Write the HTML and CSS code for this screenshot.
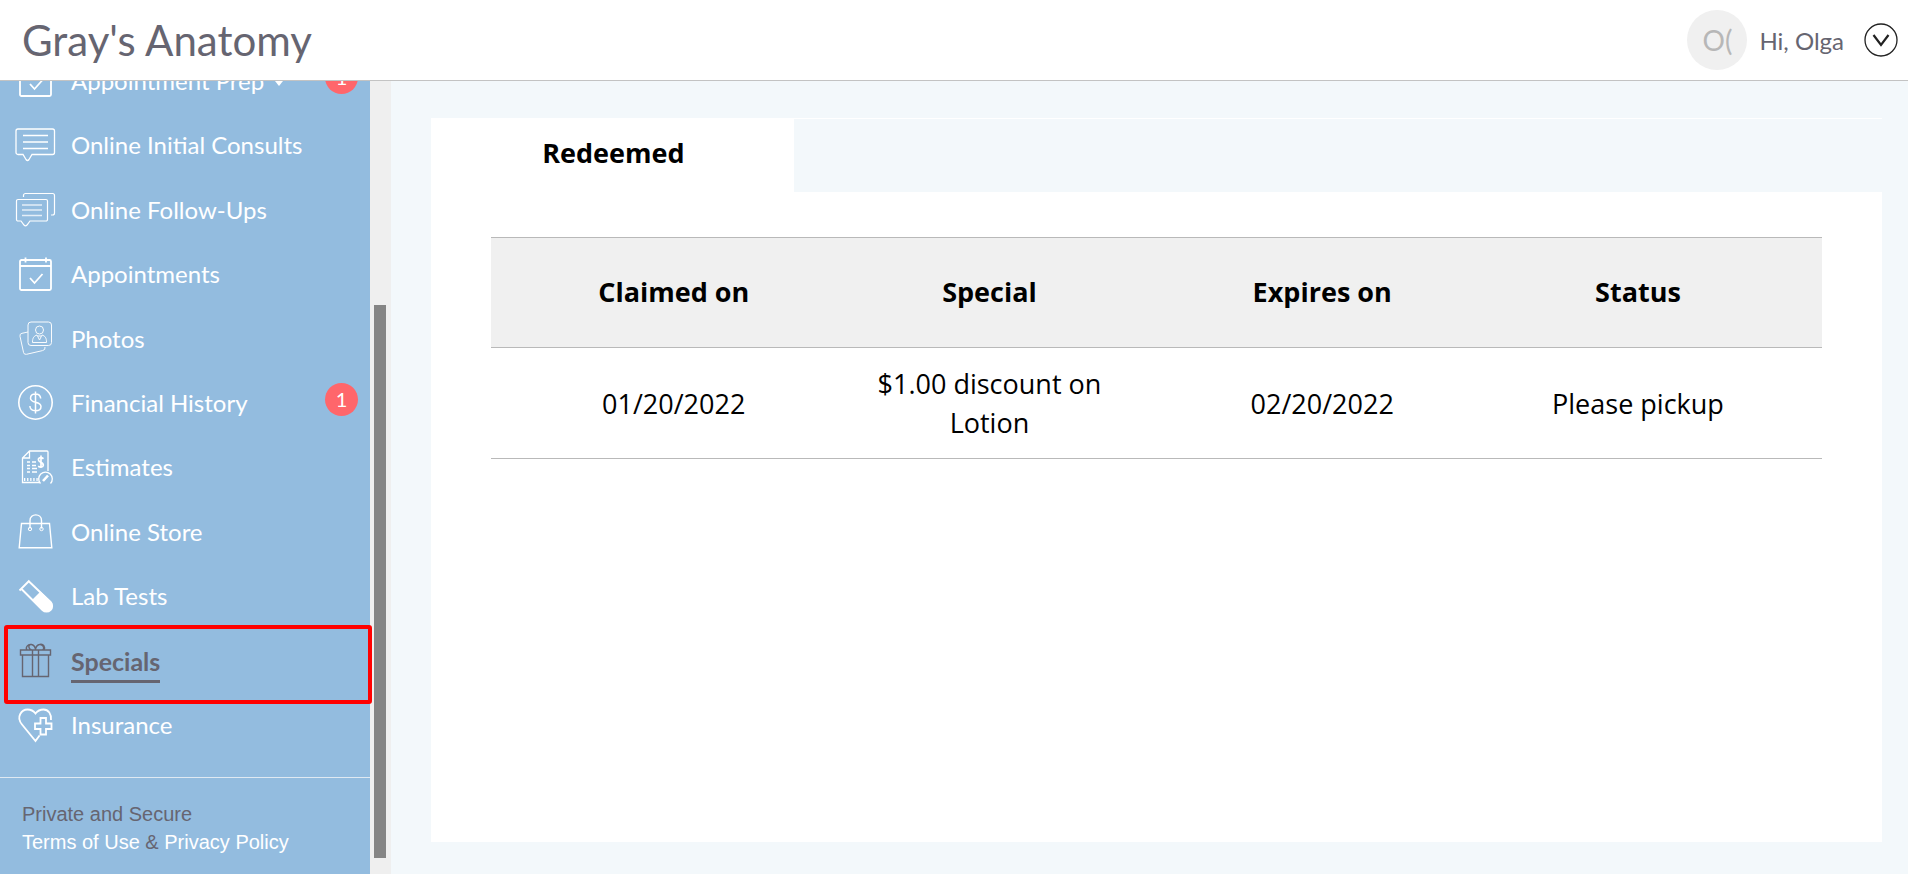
FILE: index.html
```html
<!DOCTYPE html>
<html lang="en">
<head>
<meta charset="utf-8">
<title>Gray's Anatomy - Specials</title>
<link rel="stylesheet" href="styles.css">
</head>
<body>
<header class="topbar">
  <h1 class="brand">Gray's Anatomy</h1>
  <div class="user">
    <span class="avatar">O(</span>
    <span class="greeting">Hi, Olga</span>
    <button class="user-menu" type="button" aria-label="Open user menu">
      <svg viewBox="0 0 34 34"><circle cx="17" cy="17" r="16" stroke-width="1.3"/><path d="M9.500 12l7.500 10 7.500-10" stroke-width="2.200"/></svg>
    </button>
  </div>
</header>
<div class="layout">
  <aside class="sidebar">
    <nav class="menu">
      <a class="item" href="#"><svg class="icon" viewBox="0 0 40 40"><g stroke-width="1.800"><rect x="5" y="5" width="31" height="30" rx="1.500"/><path d="M5 11h31M10.500 2.500v5M31 2.500v5M15 23l4.500 5 8-9"/></g></svg><span class="label">Appointment Prep</span><span class="caret"></span><span class="badge">1</span></a>
      <a class="item" href="#"><svg class="icon" viewBox="0 0 40 40"><path d="M3 3h34.500a2 2 0 0 1 2 2v21.500a2 2 0 0 1-2 2H17l-3 5q-1.500 2-3 0l-3-5H3a2 2 0 0 1-2-2V5a2 2 0 0 1 2-2zM8 9.500h25M8 16h25M8 22.500h25" stroke-width="1.300"/></svg><span class="label">Online Initial Consults</span></a>
      <a class="item" href="#"><svg class="icon" viewBox="0 0 40 40"><path d="M3 9.500h28a1.500 1.500 0 0 1 1.500 1.500v18.500a1.500 1.500 0 0 1-1.500 1.500H15l-3 4q-1.500 1.500-3 0l-3-4H3a1.500 1.500 0 0 1-1.500-1.500V11A1.500 1.500 0 0 1 3 9.500zM8.500 7V5.500a2 2 0 0 1 2-2h27a2 2 0 0 1 2 2v17.500a2 2 0 0 1-2 2H36" stroke-width="1.200"/><path d="M7 15h20M7 20h20M7 25.500h20" stroke-width="1.300" opacity=".75"/></svg><span class="label">Online Follow-Ups</span></a>
      <a class="item" href="#"><svg class="icon" viewBox="0 0 40 40"><g stroke-width="1.800"><rect x="5" y="5" width="31" height="30" rx="1.500"/><path d="M5 11h31M10.500 2.500v5M31 2.500v5M15 23l4.500 5 8-9"/></g></svg><span class="label">Appointments</span></a>
      <a class="item" href="#"><svg class="icon" viewBox="0 0 40 40"><g stroke-width="1" opacity=".95"><rect x="13" y="3" width="23.500" height="23.500" rx="3"/><path d="M13 13l-6 1.300a2.500 2.500 0 0 0-2 3l3.500 16a2.500 2.500 0 0 0 3 2l16-3.700a3 3 0 0 0 2.500-3.600"/><circle cx="24.500" cy="11" r="4"/><path d="M17.500 23.500c0-5 1.500-6.500 4.500-7.500l2.500 5 2.500-5c3 1 4.500 2.500 4.500 7.500zM23 17h3"/></g></svg><span class="label">Photos</span></a>
      <a class="item" href="#"><svg class="icon" viewBox="0 0 40 40"><circle cx="20.500" cy="19.500" r="16.700" stroke-width="1.600"/><path d="M20.500 8.500v22M25.700 15.500c-.2-3-2.200-4.500-5.200-4.500s-5 1.500-5 4.200c0 5.500 10.500 2.500 10.500 8.300 0 2.800-2.200 4.300-5.500 4.300s-5.500-1.500-5.600-4.700" stroke-width="1.500"/></svg><span class="label">Financial History</span><span class="badge">1</span></a>
      <a class="item" href="#"><svg class="icon" viewBox="0 0 40 40"><g stroke-width="1.300"><path d="M33 23V4q0-1-1-1H14.500L7.500 10v24.500h17M14.500 3v7h-7"/><path d="M25.500 35.500a6.800 6.800 0 1 1 10 0"/><path d="M28 33l5-5.500" stroke-width="2.600"/><path d="M12 14h3M17 14h4M12 17.500h3M17 17.500h4M12 20.500h3M17 20.500h5M12 24h3M17 24h5"/><path d="M9 31.500h14" stroke-width="3" stroke-dasharray="1.300 1.800"/><path d="M28.500 10.700q-2-1.500-3.700-.9c-2.200.8-1.700 3.100.2 4 2.200 1 3.600 1.600 3.300 3.500-.4 2.200-3.400 1.900-5.200.9M26 7.500v12.500" stroke-width="1.700"/></g></svg><span class="label">Estimates</span></a>
      <a class="item" href="#"><svg class="icon" viewBox="0 0 40 40"><path d="M6.500 11.500h28l2.300 24.300H4.200zM15 16.500V8.500c0-7.500 11.500-7.500 11.500 0v8" stroke-width="1.400"/><circle cx="15" cy="17" r="1.700"/><circle cx="26.500" cy="17" r="1.700"/></svg><span class="label">Online Store</span></a>
      <a class="item" href="#"><svg class="icon" viewBox="0 0 40 40"><path d="M4.500 13.500l10-10M6.500 12l21 21a5.500 5.500 0 0 0 8-8L14 4.500" stroke-width="1.900"/><path d="M17.500 22.500l8-8 10.500 10a6 6 0 0 1-8.500 8.500z" fill="currentColor" stroke="none"/></svg><span class="label">Lab Tests</span></a>
      <a class="item active" href="#" aria-current="page"><svg class="icon" viewBox="0 0 40 40"><path d="M5.500 9h30v5h-30zM7.500 14h26v21.500h-26zM17.500 9V35.500M23.500 9V35.500M16.500 9c-4-2-3-6 0-5.500 2 .3 3.500 2.500 4 4.500.5-2 2-4.200 4-4.500 3-.5 6 3.500 3 5.500M12 9c-2-2.500 1-6 4-5.500M24.500 3.500c4-1 6 2 4.500 5.500" stroke-width="1.400"/></svg><span class="label">Specials</span></a>
      <a class="item" href="#"><svg class="icon" viewBox="0 0 40 40"><path d="M24.500 29.500l-4 5.500L7 18.500C.5 10.500 7 3.500 12.500 3.500c3.500 0 6.500 2 8 4 1.500-2 4.500-4 8-4 5 0 8 4.500 7.500 10.500M25.500 12h5.500v5.500h5.500V23H31v5.500h-5.500V23H20v-5.500h5.500z" stroke-width="1.800"/></svg><span class="label">Insurance</span></a>
    </nav>
    <footer class="legal">
      <div>Private and Secure</div>
      <div><a href="#">Terms of Use</a> &amp; <a href="#">Privacy Policy</a></div>
    </footer>
  </aside>
  <div class="scroll-track"><div class="scroll-thumb"></div></div>
  <main class="content">
    <div class="tabs" role="tablist">
      <button class="tab" type="button" role="tab" aria-selected="true">Redeemed</button>
    </div>
    <section class="panel">
      <table class="specials">
        <thead>
          <tr><th scope="col">Claimed on</th><th scope="col">Special</th><th scope="col">Expires on</th><th scope="col">Status</th></tr>
        </thead>
        <tbody>
          <tr><td>01/20/2022</td><td>$1.00 discount on Lotion</td><td>02/20/2022</td><td>Please pickup</td></tr>
        </tbody>
      </table>
    </section>
  </main>
</div>
</body>
</html>
```
FILE: styles.css
```css
* { box-sizing: border-box; }

body {
  margin: 0;
  height: 100vh;
  display: flex;
  flex-direction: column;
  overflow: hidden;
  font-family: Lato, "Open Sans", sans-serif;
  background: #f3f8fb;
  color: #666571;
}

button {
  padding: 0;
  border: 0;
  background: none;
  font: inherit;
  color: inherit;
}

a { color: inherit; text-decoration: none; }

svg {
  display: block;
  fill: none;
  stroke: currentColor;
}

.topbar {
  position: relative;
  z-index: 2;
  flex: none;
  height: 81px;
  padding: 0 10px 0 22px;
  display: flex;
  align-items: center;
  justify-content: space-between;
  background: #fff;
  border-bottom: 1px solid #c3c3c3;
}

.brand { margin: 0; font-size: 42px; font-weight: 400; line-height: 48px; }

.user { display: flex; align-items: center; font-size: 24px; }

.avatar {
  width: 60px;
  height: 60px;
  margin-right: 12px;
  border-radius: 50%;
  display: grid;
  place-items: center;
  background: #f0f0f0;
  color: #b7b7b7;
  font-size: 28px;
}

.user-menu { width: 34px; height: 34px; margin-left: 20px; color: #222; }

.layout { flex: 1; min-height: 0; display: flex; }

.sidebar {
  width: 370px;
  flex: none;
  display: flex;
  flex-direction: column;
  background: #93bcdf;
  color: #fff;
}

/* The list is scrolled, so its first entry sits partly under the top bar. */
.menu {
  flex: 1;
  margin: -32px 0 19px;
  display: flex;
  flex-direction: column;
}

.item {
  flex: 1;
  position: relative;
  display: flex;
  align-items: center;
  padding: 0 12px 0 15px;
  font-size: 24px;
}

.label { padding-bottom: 2px; }

.icon { width: 40px; height: 40px; margin-right: 16px; flex: none; overflow: visible; }

.caret {
  margin: 4px 0 0 11px;
  border: 4px solid transparent;
  border-top: 5px solid #fff;
  border-bottom: 0;
}

.badge {
  width: 33px;
  height: 33px;
  margin: 0 0 8px auto;
  border-radius: 50%;
  display: grid;
  place-items: center;
  background: #ff666b;
  font-size: 20px;
}

.active { color: #666571; font-size: 25px; font-weight: 700; }

.active .label {
  line-height: 28px;
  padding: 7px 0 5px;
  border-bottom: 3px solid;
}

.active::after {
  content: "";
  position: absolute;
  inset: -4px -2px -10px 4px;
  z-index: 1;
  border: 4px solid #f00;
  border-radius: 3px;
}

.legal {
  flex: none;
  padding: 22px 22px 18px;
  border-top: 1px solid #dfe9f2;
  font: 20px/28px "Liberation Sans", Arial, sans-serif;
  color: #666571;
}

.legal a { color: #fff; }

.scroll-track {
  width: 21px;
  flex: none;
  padding: 224px 5px 16px 4px;
  background: #efefef;
}

.scroll-thumb { height: 100%; background: #858585; }

.content {
  flex: 1;
  display: flex;
  flex-direction: column;
  padding: 37px 26px 32px 40px;
  font: 27px/39px "Open Sans", sans-serif;
  color: #000;
}

.tabs { height: 74px; border-top: 1px solid #fff; }

.tab {
  width: 25%;
  height: 100%;
  padding: 0 0 6px 2px;
  background: #fff;
  font-weight: 700;
}

.panel { flex: 1; padding: 45px 60px; background: #fff; }

.specials {
  width: 100%;
  table-layout: fixed;
  border-collapse: collapse;
  text-align: center;
}

.specials th, .specials td {
  height: 111px;
  padding: 0 32px;
  border: solid #b9b9b9;
  border-width: 1px 0;
}

.specials th { height: 110px; padding-bottom: 2px; background: #f0f0f0; }
.specials th:nth-child(1) { width: 25.2%; }
.specials th:nth-child(2) { width: 24.5%; }
.specials th:nth-child(3) { width: 25.5%; }
.specials tr > :first-child { padding-left: 62px; }
.specials tr > :last-child { padding-right: 70px; }
```
